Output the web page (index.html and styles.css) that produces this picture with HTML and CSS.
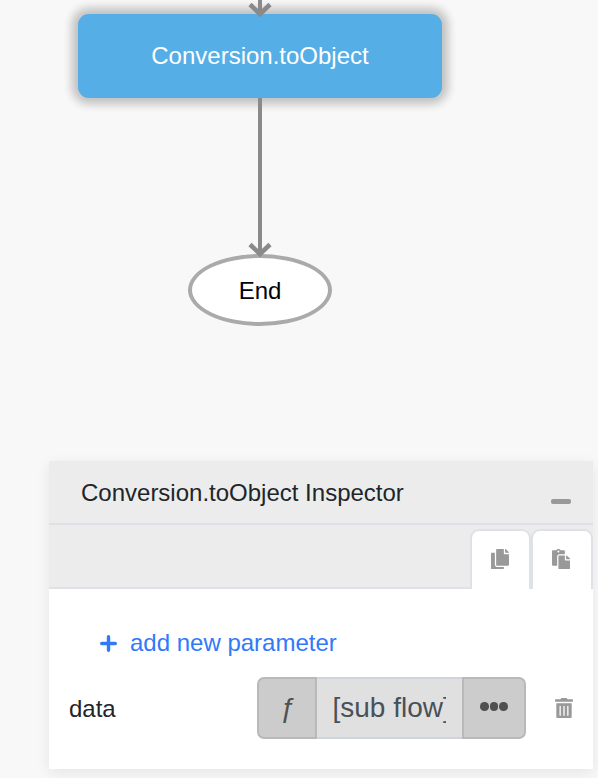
FILE: index.html
```html
<!DOCTYPE html>
<html lang="en">
<head>
<meta charset="utf-8">
<title>Flow designer</title>
<link rel="stylesheet" href="styles.css">
</head>
<body>
<main class="canvas">
  <div class="node activity">Conversion.toObject</div>
  <div class="node end">End</div>
  <svg class="links" width="598" height="270" viewBox="0 0 598 270">
    <path d="M260 0V13M260 98V253"/>
    <path class="head" d="M250 4.5L260 14L270 4.5M250 244.5L260 254L270 244.5"/>
  </svg>
  <section class="inspector">
    <header class="inspector-header">
      <h1 class="title">Conversion.toObject Inspector</h1>
      <span class="minimize"></span>
    </header>
    <nav class="tabs">
      <div class="tab">
        <svg class="icon" viewBox="0 0 448 512"><path d="M320 448v40c0 13.255-10.745 24-24 24H24c-13.255 0-24-10.745-24-24V120c0-13.255 10.745-24 24-24h72v296c0 30.879 25.121 56 56 56h168zm0-344V0H152c-13.255 0-24 10.745-24 24v368c0 13.255 10.745 24 24 24h272c13.255 0 24-10.745 24-24V128H344c-13.2 0-24-10.8-24-24zm120.971-31.029L375.029 7.029A24 24 0 0 0 358.059 0H352v96h96v-6.059a24 24 0 0 0-7.029-16.97z"/></svg>
      </div>
      <div class="tab">
        <svg class="icon" viewBox="0 0 448 512"><path d="M128 184c0-30.879 25.122-56 56-56h136V56c0-13.255-10.745-24-24-24h-80.61C204.306 12.89 183.637 0 160 0s-44.306 12.89-55.39 32H24C10.745 32 0 42.745 0 56v336c0 13.255 10.745 24 24 24h104V184zm32-144c13.255 0 24 10.745 24 24s-10.745 24-24 24-24-10.745-24-24 10.745-24 24-24zm184 248h104v200c0 13.255-10.745 24-24 24H184c-13.255 0-24-10.745-24-24V184c0-13.255 10.745-24 24-24h136v104c0 13.2 10.8 24 24 24zm104-38.059V256h-96v-96h6.059a24 24 0 0 1 16.97 7.029l65.941 65.941a24.002 24.002 0 0 1 7.03 16.971z"/></svg>
      </div>
    </nav>
    <div class="add">
      <svg class="plus" width="17" height="17" viewBox="0 0 17 17"><path d="M8.5 1.7V15.3M1.7 8.5H15.3"/></svg>
      <span>add new parameter</span>
    </div>
    <div class="row">
      <span class="label">data</span>
      <div class="group">
        <span class="cell fx">ƒ</span>
        <div class="field"><div class="value">[sub flow]</div></div>
        <span class="cell more"><i class="dot"></i><i class="dot"></i><i class="dot"></i></span>
      </div>
      <svg class="icon trash" viewBox="0 0 448 512"><path d="M32 464a48 48 0 0 0 48 48h288a48 48 0 0 0 48-48V128H32zm272-256a16 16 0 0 1 32 0v224a16 16 0 0 1-32 0zm-96 0a16 16 0 0 1 32 0v224a16 16 0 0 1-32 0zm-96 0a16 16 0 0 1 32 0v224a16 16 0 0 1-32 0zM432 32H312l-9.4-18.7A24 24 0 0 0 281.1 0H166.8a23.72 23.72 0 0 0-21.4 13.3L136 32H16A16 16 0 0 0 0 48v32a16 16 0 0 0 16 16h416a16 16 0 0 0 16-16V48a16 16 0 0 0-16-16z"/></svg>
    </div>
  </section>
</main>
</body>
</html>
```
FILE: styles.css
```css
* { box-sizing: border-box; }
body {
  margin: 0;
  font: 24px/36px "Liberation Sans", Arial, sans-serif;
  color: #212529;
}
.canvas {
  position: relative;
  height: 778px;
  overflow: hidden;
  background: #f8f8f8;
}
.node {
  position: absolute;
  display: flex;
  align-items: center;
  justify-content: center;
}
.activity {
  left: 78px;
  top: 14px;
  width: 364px;
  height: 84px;
  border-radius: 11px;
  background: #56aee7;
  color: #fff;
  box-shadow: 0 0 10px 6px rgba(0, 0, 0, .23);
}
.end {
  left: 188px;
  top: 254px;
  width: 144px;
  height: 72px;
  padding-top: 2px;
  border: 4px solid #aaa;
  border-radius: 50%;
  background: #fff;
  color: #000;
}
.links {
  position: absolute;
  left: 0;
  top: 0;
  fill: none;
  stroke: #8a8a8a;
  stroke-width: 4;
}
.head { stroke-width: 4.6; }
.inspector {
  position: absolute;
  left: 49px;
  top: 461px;
  width: 544px;
  height: 308px;
  background: #fff;
  box-shadow: 0 4px 14px rgba(0, 0, 0, .08);
}
.inspector-header {
  display: flex;
  justify-content: space-between;
  height: 64px;
  padding: 14px 22px 0 32px;
  background: #ececec;
  border-bottom: 2px solid #dee2e6;
}
.title {
  margin: 0;
  font-size: 24px;
  font-weight: 400;
}
.minimize {
  width: 20px;
  height: 5px;
  margin-top: 24px;
  border-radius: 2px;
  background: #999;
}
.tabs {
  display: flex;
  justify-content: flex-end;
  height: 64px;
  padding-top: 4px;
  background: #ececec;
  box-shadow: inset 0 -2px #dee2e6;
}
.tab {
  display: flex;
  align-items: center;
  justify-content: center;
  width: 61px;
  padding: 0 2px 2px 0;
  border: 2px solid #dee2e6;
  border-bottom: 0;
  border-radius: 9px 9px 0 0;
  background: #fff;
}
.tab:last-child { width: 62px; }
.icon {
  width: 18px;
  height: 20.5px;
  fill: #999;
}
.add {
  display: flex;
  align-items: center;
  gap: 13px;
  margin-top: 36px;
  padding-left: 51px;
  color: #307af7;
}
.plus {
  fill: none;
  stroke: #307af7;
  stroke-width: 3.4;
  stroke-linecap: round;
}
.row {
  display: flex;
  align-items: center;
  height: 62px;
  margin-top: 16px;
  padding-left: 20px;
}
.label { width: 188px; padding-top: 2px; }
.group { display: flex; width: 269px; height: 62px; }
.cell {
  display: flex;
  align-items: center;
  justify-content: center;
  border: 2px solid #b9b9b9;
  background: #ccc;
  color: #505050;
}
.fx {
  width: 60px;
  border-radius: 7px 0 0 7px;
  font-size: 28px;
  font-style: italic;
}
.field {
  flex: 1;
  min-width: 0;
  padding: 11px 16px 0 15.5px;
  border: solid #ced4da;
  border-width: 2px 0;
  background: #e0e0e0;
}
.value {
  overflow: hidden;
  font-size: 28px;
  color: #495057;
  white-space: nowrap;
}
.more {
  width: 64px;
  gap: 1.2px;
  padding-bottom: 3px;
  border-radius: 0 7px 7px 0;
}
.dot {
  width: 8.5px;
  height: 8.5px;
  border-radius: 50%;
  background: #505050;
}
.trash { margin-left: 29px; }
```
